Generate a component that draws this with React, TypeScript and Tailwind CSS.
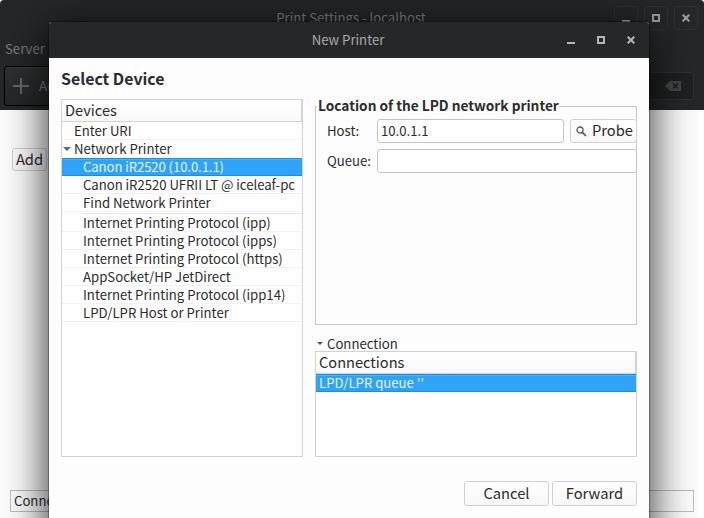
import type { ReactNode } from 'react';

const font = "font-['Noto_Sans_CJK_SC','Noto_Sans',sans-serif]";

function Minimize() {
  return <svg width="8" height="8" viewBox="0 0 8 8"><path d="M0 6h8v2H0z" fill="currentColor" /></svg>;
}
function Maximize() {
  return <svg width="8" height="8" viewBox="0 0 8 8"><path d="M1 1h6v6H1z" fill="none" stroke="currentColor" strokeWidth="2" /></svg>;
}
function Close() {
  return <svg width="8" height="8" viewBox="0 0 8 8"><path d="M.7.7l6.6 6.6M7.3.7L.7 7.3" fill="none" stroke="currentColor" strokeWidth="2" /></svg>;
}

function Label({ children, className = '' }: { children: ReactNode; className?: string }) {
  return <span className={`block whitespace-nowrap ${className}`}>{children}</span>;
}

function Row({ children, indent = 'pl-[21px]' }: { children: ReactNode; indent?: string }) {
  return <div className={`flex h-[18px] items-center whitespace-nowrap border-b border-[#f2f2f2] leading-[18px] ${indent}`}>{children}</div>;
}

function Selected({ children, indent }: { children: ReactNode; indent: string }) {
  return (
    <div className={`flex h-[18px] items-center whitespace-nowrap border-b border-t border-b-[#1b8ee3] border-t-[#2389d8] bg-[#2ea3f8] leading-[18px] text-[#e8f4fe] shadow-[inset_0_1px_0_#50b2f9] ${indent}`}>
      {children}
    </div>
  );
}

function Header({ children }: { children: ReactNode }) {
  return (
    <div className="flex h-[22px] shrink-0 items-center border-b border-r border-[#d2d2d2] bg-gradient-to-b from-white to-[#f8f8f8] pb-[2px] pl-[3px] text-[14.6px] leading-[20px]">
      {children}
    </div>
  );
}

const button = 'flex items-center justify-center rounded-[3px] border border-[#d0d0d0] bg-gradient-to-b from-white to-[#f7f7f7] pb-[2px] text-[14.7px] leading-[20px]';

function MainWindow() {
  return (
    <div className="flex h-[518px] w-[704px] flex-col bg-[#fdfdfd]">
      <div className="h-[110px] rounded-t-[4px] bg-[#262728] text-[#7c7d7e]">
        <div className="relative flex h-9 justify-center">
          <Label className="-ml-[2px] pt-[7px] leading-[22px] text-[#7f8082]">Print Settings - localhost</Label>
          <div className="absolute right-[6px] top-[6px] flex gap-[6px] text-[#a0a0a0]">
            <div className="flex size-6 items-center justify-center rounded-[3px] border border-[#303132]"><Minimize /></div>
            <div className="flex size-6 items-center justify-center rounded-[3px] border border-[#303132]"><Maximize /></div>
            <div className="flex size-6 items-center justify-center rounded-[3px] border border-[#303132]"><Close /></div>
          </div>
        </div>
        <Label className="h-[30px] pl-[5px] pt-[2px] leading-[22px]">Server</Label>
        <div className="flex justify-between pl-1 pr-[10px]">
          <div className="flex h-10 w-[82px] items-center rounded-[3px] border border-black bg-gradient-to-b from-[#303132] to-[#252627] pl-2 text-[#7c7d7f] shadow-[inset_0_1px_0_#3a3b3c]">
            <svg width="16" height="16" viewBox="0 0 16 16"><path d="M8 0v16M0 8h16" stroke="#66676a" strokeWidth="2" /></svg>
            <Label className="pl-[10px]">Add</Label>
          </div>
          <div className="mt-[6px] flex h-7 w-[130px] items-center justify-end rounded-[3px] border border-[#303132] bg-[#1f2021] pr-3">
            <svg width="16" height="10" viewBox="0 0 16 10"><path d="M0 5L5 0h11v10H5z" fill="#444546" /><path d="M8 2.5l5 5M13 2.5l-5 5" stroke="#1f2021" strokeWidth="1.6" /></svg>
          </div>
        </div>
      </div>
      <div className="flex flex-1 flex-col justify-between px-[10px] pb-[6px] pt-[38px]">
        <div className={`${button} ml-[2px] h-[23px] w-[35px]`}>Add</div>
        <div className="flex h-[22px] items-center border border-[#bdbdbd] pl-[3px]">Connected to localhost</div>
      </div>
    </div>
  );
}

function Devices() {
  return (
    <div className="flex h-[358px] w-[242px] flex-col border border-[#d2d2d2] bg-white">
      <Header>Devices</Header>
      <Row indent="pl-[12px]">Enter URI</Row>
      <div className="flex h-[18px] items-center pb-px pl-px leading-[18px]">
        <svg width="8" height="4" viewBox="0 0 8 4" className="mr-[3px]"><path d="M0 0h8L4 4z" fill="#666" /></svg>
        Network Printer
      </div>
      <Selected indent="pl-[21px] tracking-[-0.1px]">Canon iR2520 (10.0.1.1)</Selected>
      <Row indent="pl-[21px] tracking-[-0.04px]">Canon iR2520 UFRII LT @ iceleaf-pc</Row>
      <Row>Find Network Printer</Row>
      <div className="ml-[20px] h-[2px] border-b border-[#e6e6e6]" />
      <Row>Internet Printing Protocol (ipp)</Row>
      <Row>Internet Printing Protocol (ipps)</Row>
      <Row>Internet Printing Protocol (https)</Row>
      <Row>AppSocket/HP JetDirect</Row>
      <Row>Internet Printing Protocol (ipp14)</Row>
      <Row>LPD/LPR Host or Printer</Row>
    </div>
  );
}

function Location() {
  return (
    <div className="flex h-[226px] flex-col">
      <div className="z-10 -mb-[7px] ml-[2px] h-[14px] self-start whitespace-nowrap bg-[#fdfdfd] pl-[1px] text-[13.7px] font-bold leading-[12px]">
        Location of the LPD network printer
      </div>
      <div className="flex flex-1 flex-col gap-[6px] border border-[#c6c6c6] pl-[11px] pt-[12px]">
        <div className="-mr-px flex h-6 items-center leading-[18px]">
          <Label className="w-[50px]">Host:</Label>
          <div className="flex h-6 w-[187px] items-center rounded-[3px] border border-[#c4c4c4] bg-white pl-[3px]">10.0.1.1</div>
          <div className={`${button} ml-[6px] h-6 w-[67px] shrink-0 pl-[2px]`}>
            <svg width="11" height="11" viewBox="0 0 11 11" className="mr-[5px] mt-[2px] shrink-0"><circle cx="4" cy="4" r="3" fill="none" stroke="#555" strokeWidth="1.3" /><path d="M6.3 6.3L10 10" stroke="#555" strokeWidth="1.7" /></svg>
            Probe
          </div>
        </div>
        <div className="-mr-px flex h-6 items-center leading-[18px]">
          <Label className="w-[50px]">Queue:</Label>
          <div className="h-6 flex-1 rounded-[3px] border border-[#c4c4c4] bg-white" />
        </div>
      </div>
    </div>
  );
}

function Connections() {
  return (
    <>
      <div className="mt-[11px] flex h-[15px] items-center pl-[2px] leading-[17px]">
        <svg width="6" height="3" viewBox="0 0 6 3" className="mr-[4px]"><path d="M0 0h6L3 3z" fill="#555" /></svg>
        Connection
      </div>
      <div className="h-[106px] border border-[#d2d2d2] bg-white">
        <Header>Connections</Header>
        <Selected indent="pl-[3px]">LPD/LPR queue &#39;&#39;</Selected>
      </div>
    </>
  );
}

function PrinterDialog() {
  return (
    <div className="absolute left-[49px] top-[22px] flex h-[540px] w-[600px] flex-col rounded-t-[3px] bg-[#fdfdfd] shadow-[0_0_0_1px_rgba(0,0,0,0.3),0_8px_46px_rgba(0,0,0,0.88)]">
      <div className="relative flex h-9 items-center justify-center rounded-t-[3px] bg-[#262728] text-[#a9aaab]">
        <Label className="-translate-x-px">New Printer</Label>
        <div className="absolute right-[14px] top-[14px] flex gap-[22px] text-[#b5b6b6]">
          <Minimize /><Maximize /><Close />
        </div>
      </div>
      <div className="flex flex-col px-3 pt-[10px]">
        <h1 className="h-[31px] text-[15.9px] font-bold leading-[22px]">Select Device</h1>
        <div className="flex gap-3">
          <Devices />
          <div className="flex w-[322px] flex-col"><Location /><Connections /></div>
        </div>
        <div className="mt-6 flex justify-end gap-[3px]">
          <div className={`${button} h-[25px] w-[85px]`}>Cancel</div>
          <div className={`${button} h-[25px] w-[85px]`}>Forward</div>
        </div>
      </div>
    </div>
  );
}

export default function App() {
  return (
    <div className={`relative h-[518px] w-[704px] overflow-hidden bg-[#7fa0a5] text-[13.17px] text-[#2b2c2d] ${font}`}>
      <MainWindow />
      <PrinterDialog />
    </div>
  );
}
